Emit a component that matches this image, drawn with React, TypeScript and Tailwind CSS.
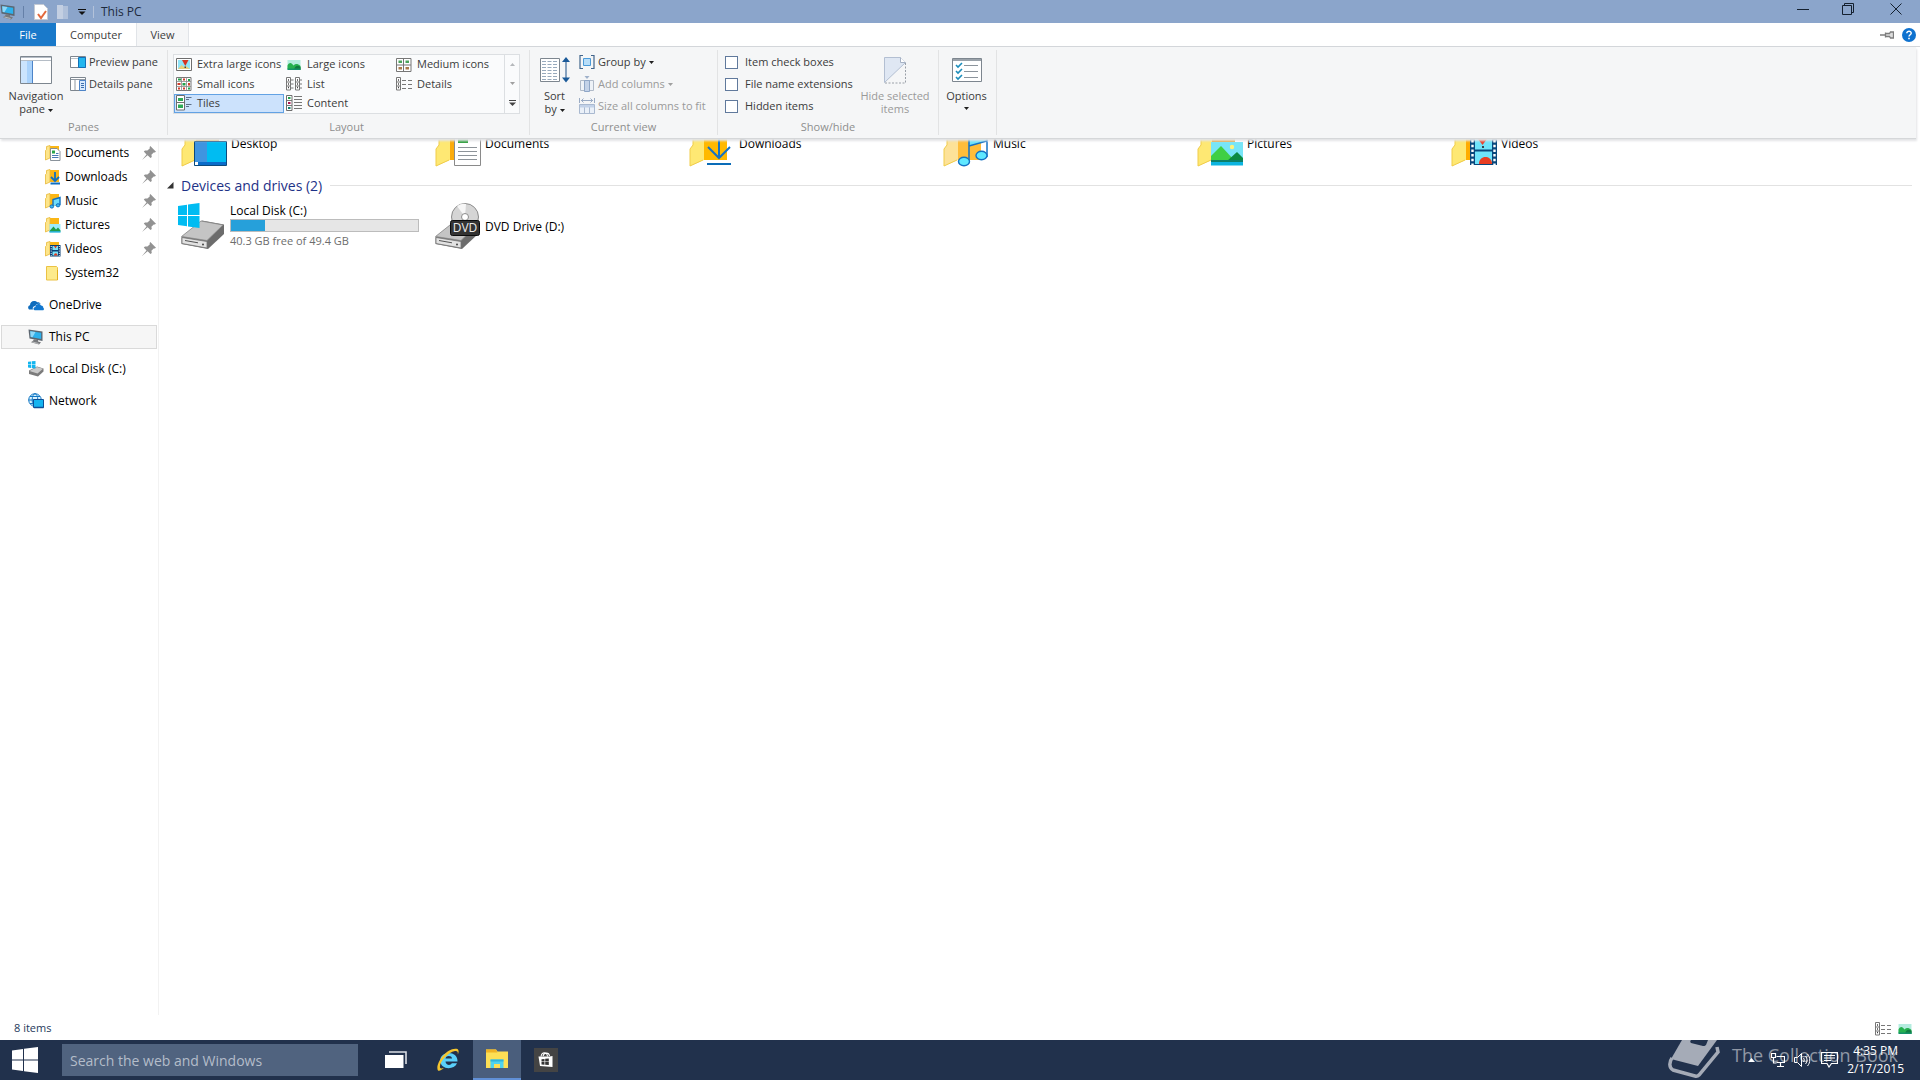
import React from "react";
import clsx from "clsx";

/* ---------- small icons (16px) ---------- */

type IconProps = { className?: string };

function PcIcon({ className }: IconProps) {
  return (
    <svg viewBox="0 0 16 16" className={clsx("size-4 shrink-0", className)}>
      <path d="M.5.5l14 2v9.500l-13-2.500z" fill="#5c6670" />
      <path d="M2.200 2.200l11 1.600v6.200l-10.500-2z" fill="#2db1ec" />
      <path d="M2.200 2.200l5.300.8-3 5.200-1.800-.3z" fill="#8fd8f8" />
      <path d="M6 10.200l4 .8v1.500l3 .8-2 2.200-8-2.200 2-1.600z" fill="#77797c" />
      <path d="M4.500 13l6 1.500" stroke="#c9cbcd" strokeWidth="0.8" />
    </svg>
  );
}

function SmallFolder({ children }: { children?: React.ReactNode }) {
  return (
    <svg viewBox="0 0 16 16" className="size-4 shrink-0">
      <path d="M2.500 1h11.500v12h-11.500z" fill="#fbb615" />
      <path d="M.5 15V5.500l1-1V1.500l3.500-1v12.500z" fill="#fde58a" stroke="#e9b93a" strokeWidth="0.8" />
      {children}
    </svg>
  );
}

const docSmall = (
  <>
    <path d="M5.500 3.500h6.500l3 3v9H5.500z" fill="#fff" stroke="#7d8790" strokeWidth="0.9" />
    <path d="M7 5.500h3v3H7z" fill="#2aa54a" />
    <path d="M7 10.500h6.500M7 12.500h6.500M11 8.500h2.500" stroke="#4a78b5" />
  </>
);
const downSmall = (
  <path d="M10 3v8.500M6 8l4 4 4-4M5.500 14.500h9.500" fill="none" stroke="#0f6fc0" strokeWidth="1.800" />
);
const musicSmall = (
  <>
    <path d="M8 13V6.500l7-2V12" fill="#6fdcfa" stroke="#0f6fc0" strokeWidth="1.400" />
    <ellipse cx="6.800" cy="13.500" rx="1.800" ry="1.600" fill="#3ab8ee" stroke="#0f6fc0" />
    <ellipse cx="13" cy="12.300" rx="1.800" ry="1.600" fill="#3ab8ee" stroke="#0f6fc0" />
  </>
);
const picSmall = (
  <>
    <path d="M4.500 7h11v8.500h-11z" fill="#9cebfb" />
    <path d="M4.500 14l4-4.500 2.500 3 2-2 2.500 3v1h-11z" fill="#1f9c4a" />
    <path d="M4.500 14.300h11v1.200h-11z" fill="#13a8d8" />
  </>
);
const videoSmall = (
  <>
    <path d="M5 4h10.500v11.500H5z" fill="#083f75" />
    <path d="M7.500 5h5.500v4H7.500zM7.500 10.500h5.500v4H7.500z" fill="#7ce2f8" />
    <path d="M9 5h3l-1.500 2.500zM9 14.500c0-3 3.500-3 3.500 0z" fill="#e33a20" />
    <path d="M6.200 5v10M14.300 5v10" stroke="#fff" strokeDasharray="1 1.300" />
  </>
);

function PlainFolder() {
  return (
    <svg viewBox="0 0 16 16" className="size-4 shrink-0">
      <path d="M1.500 1.500h10l1 1v12.500h-11z" fill="#fdea8b" stroke="#ebc244" />
      <path d="M12.500 5v10" stroke="#e3ae1c" />
    </svg>
  );
}

function OneDriveIcon() {
  return (
    <svg viewBox="0 0 16 16" className="size-4 shrink-0">
      <path d="M1 12.500C-.6 11 .2 8.500 2 8.300 2 5.500 4 3.800 6.300 4c1.500 0 2.400.7 3 1.300 1.300-.3 2.800.3 3.300 1.700-3-1-5 .3-5.200 2C5 9.300 4.300 11 5 12.500z" fill="#0f6cbd" />
      <path d="M6.700 13.300c-1.700-.3-1.800-3 .7-3.300 0-3 4-4.200 5.600-1.500C15 8.600 15.400 10 15.200 10.700c1.300.8.800 2.600-.5 2.600z" fill="#1277cf" />
    </svg>
  );
}

function DiskSmall() {
  return (
    <svg viewBox="0 0 16 16" className="size-4 shrink-0">
      <path d="M1 9.500L9 5.500l6.500 2v3L10 15.500l-9-2.500z" fill="#7b7b7b" />
      <path d="M1.500 10L9 6l6 1.800-5.500 4.600z" fill="#c9c9c9" />
      <path d="M0 .8l3-.4v3H0zM3.700.3L7.500 0v3.400H3.700zM0 4h3v3l-3-.4zM3.700 4h3.800v3.500l-3.800-.4z" fill="#12b5ef" />
    </svg>
  );
}

function NetworkIcon() {
  return (
    <svg viewBox="0 0 16 16" className="size-4 shrink-0">
      <circle cx="7" cy="7" r="6.300" fill="#d9f2fd" stroke="#1277c4" />
      <ellipse cx="7" cy="7" rx="2.800" ry="6.300" fill="none" stroke="#1277c4" />
      <path d="M.7 7h12.600M2 3.500h10M2 10.500h4" stroke="#1277c4" />
      <path d="M5.500 6.500h10v8h-10z" fill="#14b4f0" stroke="#0d4f96" />
      <path d="M6 14.500h9.500" stroke="#0d4f96" strokeWidth="1.500" />
    </svg>
  );
}

function PinIcon() {
  return (
    <svg viewBox="0 0 14 14" className="size-[14px] shrink-0">
      <path d="M8.300 0L14 5.700l-1.300.8-1-.1-2.300 2.300.4 2.300-1.300 1L5.600 9.300 0 14l4.500-5.600L1.800 5.600l1.200-1.200 2.400.2L7.700 2.400V1z" fill="#929292" />
    </svg>
  );
}

/* ---------- ribbon icons ---------- */

function NavPaneIcon() {
  return (
    <svg viewBox="0 0 32 28" className="h-7 w-8">
      <path d="M.5.5h31v27H.5z" fill="#fff" stroke="#7d868f" />
      <path d="M1 1.500h30M1 4.500h30" stroke="#b5bdc6" />
      <path d="M1 5h11.500v22H1z" fill="#a9d2fb" />
      <path d="M1 5h6v22H1z" fill="#cbe4fd" />
      <path d="M12.500 5v22" stroke="#4d84c8" />
    </svg>
  );
}

function PreviewIcon() {
  return (
    <svg viewBox="0 0 16 13" className="h-[13px] w-4">
      <path d="M.5.5h15v11H.5z" fill="#fff" stroke="#7d868f" />
      <path d="M1 2.500h14" stroke="#b9c1c9" />
      <path d="M8.500 1.500h7v10h-7z" fill="#23b6ee" stroke="#1370b8" />
    </svg>
  );
}

function DetailsPaneIcon() {
  return (
    <svg viewBox="0 0 16 14" className="h-[14px] w-4">
      <path d="M.5.5h15v13H.5z" fill="#fff" stroke="#7d868f" />
      <path d="M1 2.500h14M5 3v10" stroke="#8f98a1" />
      <path d="M9.500 3.500h6v10h-6z" fill="#d8eafd" stroke="#4d84c8" />
      <path d="M11 6.500h3M11 8.500h3M11 10.500h3" stroke="#3d6fae" />
    </svg>
  );
}

function XlIcon() {
  return (
    <svg viewBox="0 0 16 14" className="h-[14px] w-4">
      <path d="M.5.5h15v12H.5z" fill="#fff" stroke="#6e6e6e" />
      <path d="M2 2h12v9H2z" fill="#8fe4f8" />
      <path d="M2 11l3.500-4L8 9l2-1 4 3z" fill="#e8cf7a" />
      <path d="M6 2h6.500L9.300 8z" fill="#d63322" />
      <path d="M8.500 8.500h1.500v1.500H8.500z" fill="#444" />
    </svg>
  );
}

function LargeIcon() {
  return (
    <svg viewBox="0 0 16 14" className="h-[14px] w-4">
      <path d="M1.500 2h13v10h-13z" fill="#b4ecdf" />
      <path d="M1.500 11V7.500c2-3.500 4-3 6 0 2-2 4-2 7 .5v3z" fill="#25b04f" />
      <path d="M8 12c1-5 4-5 6.500-3v3z" fill="#107c41" />
      <path d="M1.500 10.500h13V12h-13z" fill="#15926a" />
    </svg>
  );
}

function GridIcon({ dense }: { dense?: boolean }) {
  return (
    <svg viewBox="0 0 16 14" className="h-[14px] w-4">
      <path d="M.5.500h14.500v13H.5z" fill="#fff" stroke="#777" />
      {dense ? (
        <>
          <path d="M5.500.5v13M10.500.5v13M.5 4.500h14.500M.5 9.500h14.500" stroke="#8a8a8a" strokeWidth="0.800" />
          <path d="M2 1.500h3v2H2zM12 2h2v2h-2zM6.500 6h3v2.500h-3zM12 10.500h2v2h-2z" fill="#22a14b" />
          <path d="M7 1.500h2v2H7zM1.500 6h3v2h-3zM12 6h2v2.500h-2zM2 10.500h2v2H2zM7 10.500h2v2H7z" fill="#d23b2a" />
        </>
      ) : (
        <>
          <path d="M7.500 .5v13M.5 7h14.500" stroke="#777" />
          <path d="M2.500 2.500h3.500v2.500H2.500zM9.500 2.500h3.500v2.500H9.500z" fill="#4aa35a" />
          <path d="M2.500 9h3.500v2.500H2.500zM9.500 9h3.500v2.500H9.500z" fill="#a97a4a" />
        </>
      )}
    </svg>
  );
}

function ListIcon() {
  return (
    <svg viewBox="0 0 16 14" className="h-[14px] w-4">
      <path d="M.5.500h4v12.500h-4zM9.500.500h4v12.500h-4z" fill="#fff" stroke="#777" />
      <path d="M2 3h1M2 7h1M2 10.500h1M11 3h1M11 7h1M11 10.500h1" stroke="#444" strokeWidth="1.500" />
      <path d="M.5 5h4M.5 9h4M9.500 5h4M9.500 9h4M5 3h2.500M5 7h2.500M5 11h2.500M14 3h2M14 7h2M14 11h2" stroke="#777" />
    </svg>
  );
}

function DetailsIcon() {
  return (
    <svg viewBox="0 0 16 14" className="h-[14px] w-4">
      <path d="M.5.500h4v12.500h-4z" fill="#fff" stroke="#777" />
      <path d="M2 3h1M2 7h1M2 10.500h1" stroke="#444" strokeWidth="1.500" />
      <path d="M.5 5h4M.5 9h4M6 3.500h4M6 7.500h4M6 11.500h4M12 3.500h4M12 7.500h4M12 11.500h4" stroke="#777" />
    </svg>
  );
}

function TilesIcon() {
  return (
    <svg viewBox="0 0 16 16" className="size-4">
      <path d="M.5.500h8v14.500h-8zM.5 7.500h8" fill="#fff" stroke="#6e6e6e" />
      <path d="M2 3h5v3H2zM2 9.500h5v3.500H2z" fill="#2fab57" />
      <path d="M10 2.500h5.500M10 4.500h3M10 9.500h5.500M10 11.500h3" stroke="#5c7089" />
    </svg>
  );
}

function ContentIcon() {
  return (
    <svg viewBox="0 0 16 16" className="size-4">
      <path d="M.5.500h5.500v15H.5z" fill="#fff" stroke="#6e6e6e" />
      <path d="M.5 5.500h5.500M.5 10.500h5.500M8 1.500h8M8 4.500h8M8 7.500h8M8 10.500h8M8 13.500h8" stroke="#777" />
      <path d="M2 2h2.500v2H2z" fill="#22a14b" />
      <path d="M2 7h2.500v2H2z" fill="#b0134f" />
      <path d="M2 12h2.500v2H2z" fill="#14806a" />
    </svg>
  );
}

function SortIcon() {
  return (
    <svg viewBox="0 0 32 28" className="h-7 w-8">
      <path d="M1.500 2.500h19v23h-19z" fill="#fff" stroke="#7d868f" />
      <path d="M3 5.500h16M3 8.500h16M3 11.500h16M3 14.500h16M3 17.500h16M3 20.500h16M3 23.500h16" stroke="#98aabd" strokeDasharray="4 1.500" />
      <path d="M27 4v19" stroke="#1b4f87" />
      <path d="M27 1l4 5h-8zM27 26.500l4-5h-8z" fill="#1b5a99" />
    </svg>
  );
}

function GroupIcon() {
  return (
    <svg viewBox="0 0 16 14" className="h-[14px] w-4">
      <path d="M4 .5H1v13h3M12 .5h3v13h-3" fill="none" stroke="#41658c" strokeWidth="1.200" />
      <path d="M4.500 3.500h7v7h-7z" fill="#b8def9" stroke="#4b9ad8" />
    </svg>
  );
}

function AddColIcon() {
  return (
    <svg viewBox="0 0 16 16" className="size-4">
      <path d="M1.500 4.500h13v10h-13z" fill="#eef2f7" stroke="#b0bac8" />
      <path d="M5.500 4.500h5v11h-5z" fill="#c3d2e8" stroke="#8fa6c6" />
      <path d="M5.500 0h5L8 3z" fill="#9fb1ca" />
    </svg>
  );
}

function SizeColIcon() {
  return (
    <svg viewBox="0 0 16 16" className="size-4">
      <path d="M.5 0v5M15.500 0v5M2 2.500h12M4.500.5l-2 2 2 2M11.500.5l2 2-2 2" fill="none" stroke="#9aabc4" />
      <path d="M.5 6.500h15v9H.5zM5.500 9v6M10.500 9v6" fill="#eaf0f8" stroke="#a9b9d0" />
      <path d="M1 7h14v2.500H1z" fill="#c3d2e8" />
    </svg>
  );
}

function HideIcon() {
  return (
    <svg viewBox="0 0 24 28" className="h-7 w-6">
      <path d="M1.500 1.500h16l5 5-21 20z" fill="#dfe7f3" stroke="#b3bfd2" />
      <path d="M17.500 1.500v5h5" fill="#fff" stroke="#a7b2c4" />
      <path d="M22.500 7v20h-21" fill="none" stroke="#9aa0a8" strokeDasharray="2 1.500" />
    </svg>
  );
}

function OptionsIcon() {
  return (
    <svg viewBox="0 0 32 26" className="h-[26px] w-8">
      <path d="M1.500 1.500h29v23h-29z" fill="#fff" stroke="#7d868f" />
      <path d="M2 3h28" stroke="#9aa2aa" strokeWidth="2" />
      <path d="M13 8.500h14M13 14.500h14M13 20.500h14" stroke="#8c949c" />
      <path d="M5 8l2 2 4-4M5 14l2 2 4-4M5 20l2 2 4-4" fill="none" stroke="#1c8dbb" strokeWidth="1.600" />
    </svg>
  );
}

function Caret({ faded }: { faded?: boolean }) {
  return (
    <svg viewBox="0 0 5 3" className={clsx("inline-block h-[3px] w-[5px] shrink-0", faded ? "fill-[#a0a0a0]" : "fill-[#1f1f1f]")}>
      <path d="M0 0h5L2.500 3z" />
    </svg>
  );
}

/* ---------- large icons, only the lower part of the folders is scrolled into view ---------- */

function FolderTile({ back, children, pale }: { back: string; children: React.ReactNode; pale?: boolean }) {
  return (
    <svg viewBox="0 0 48 28" className="h-7 w-12 shrink-0">
      <path d="M13 0h25v21H13z" fill={back} />
      <path d="M1 27V10l3-4V0h11v21z" fill={pale ? "#fde298" : "#fee873"} />
      <path d="M1 27V10l3-4V0M1 27l13-6" fill="none" stroke="#f0cc4a" />
      {children}
    </svg>
  );
}

const folders = [
  {
    name: "Desktop",
    back: "#e2ab3c",
    art: (
      <>
        <path d="M13.500 2.500h32v24h-32z" fill="#00bcf2" stroke="#0b4a7d" />
        <path d="M14 3h12v20H14z" fill="#3f94e0" />
        <path d="M14 23h31v3H14z" fill="#0a6cc9" />
        <path d="M14 23h3v3h-3z" fill="#fff" />
      </>
    ),
  },
  {
    name: "Documents",
    back: "#fbab0c",
    art: (
      <>
        <path d="M19.500-1h26v27.500h-26z" fill="#fff" stroke="#8a8a8a" />
        <path d="M23 0h10v4H23z" fill="#2f9f3d" />
        <path d="M23 8.500h19M23 12.500h19M23 16.500h19M23 20.500h19" stroke="#8d9399" />
      </>
    ),
  },
  {
    name: "Downloads",
    back: "#ffb900",
    art: (
      <>
        <path d="M30 0v18M19 8l11 11 11-11" fill="none" stroke="#1472c4" strokeWidth="2" />
        <path d="M18 24h24v2H18z" fill="#0a6cb8" />
      </>
    ),
  },
  {
    name: "Music",
    pale: true,
    back: "#ffbd3a",
    art: (
      <>
        <path d="M26 0h18v2L26 7z" fill="#6be3fb" />
        <path d="M26 24V0M26 7l18-5V0v18" fill="none" stroke="#1472c4" strokeWidth="1.500" />
        <ellipse cx="21" cy="22.500" rx="5.500" ry="4.300" fill="#5fe8ff" stroke="#1472c4" strokeWidth="1.400" />
        <ellipse cx="38.500" cy="16.500" rx="5.500" ry="4.300" fill="#5fe8ff" stroke="#1472c4" strokeWidth="1.400" />
      </>
    ),
  },
  {
    name: "Pictures",
    back: "#e2a43e",
    art: (
      <>
        <path d="M14 3h32v23H14z" fill="#77e5f7" />
        <circle cx="35" cy="8" r="2.200" fill="#fff27a" />
        <path d="M14 22V17l10-10 14 15z" fill="#3fcf43" />
        <path d="M30 22l10-9 6 6v3z" fill="#0c8a42" />
        <path d="M14 21h32v2H14z" fill="#0c8068" />
        <path d="M14 23h32v3.500H14z" fill="#0cb4e0" />
      </>
    ),
  },
  {
    name: "Videos",
    back: "#ffac00",
    art: (
      <>
        <path d="M19 0h27v26H19z" fill="#08477c" />
        <path d="M24 0h17v10.500H24zM24 12.500h17V25H24z" fill="#6fe3fa" />
        <path d="M27 0h9l-4.500 6z" fill="#e8402a" />
        <path d="M31 7h2v2h-2z" fill="#34424f" />
        <path d="M28 25c0-9 12-9 13-1v1z" fill="#e83d22" />
        <path d="M21.500 1v25M43.500 1v25" stroke="#fff" strokeWidth="2.400" strokeDasharray="2.500 2.200" />
      </>
    ),
  },
];

function DriveBody() {
  return (
    <>
      <path d="M3.500 34L24 17.500l22 4V31L30 46 3.500 41z" fill="#6c6c6c" />
      <path d="M3.500 33.500L23 18l22 4-16 15.500z" fill="#c4c4c4" stroke="#8a8a8a" strokeWidth="0.800" />
      <path d="M4 34.500l25 4v6.500L4 40.500z" fill="#e2e2e2" stroke="#777" strokeWidth="0.800" />
      <path d="M7 37.500l13 2.300" stroke="#555" />
      <circle cx="25" cy="41.500" r="1" fill="#444" />
    </>
  );
}

function LocalDiskIcon() {
  return (
    <svg viewBox="0 0 48 48" className="size-12 shrink-0">
      <DriveBody />
      <path d="M0 3l9-1.200V12H0zM10 1.600L21.500 0v12H10zM0 13h9v10.200L0 22zM10 13h11.500v12L10 23.400z" fill="#00bcf2" />
    </svg>
  );
}

function DvdIcon() {
  return (
    <svg viewBox="0 0 48 48" className="size-12 shrink-0">
      <DriveBody />
      <circle cx="33" cy="14" r="13.500" fill="#d5d5d5" stroke="#8b8b8b" />
      <path d="M33 14L25 3a13 13 0 0 1 9-2z" fill="#f6f6f6" />
      <circle cx="33" cy="14" r="3.500" fill="#fff" stroke="#8b8b8b" />
      <rect x="18.500" y="17.500" width="29" height="15" rx="2" fill="#333" stroke="#0c0c0c" />
      <text x="33" y="29" textAnchor="middle" fontSize="12" fill="#ececec">DVD</text>
    </svg>
  );
}

/* ---------- data ---------- */

const quickAccess = [
  { name: "Documents", icon: docSmall },
  { name: "Downloads", icon: downSmall },
  { name: "Music", icon: musicSmall },
  { name: "Pictures", icon: picSmall },
  { name: "Videos", icon: videoSmall },
];

const roots = [
  { name: "OneDrive", icon: <OneDriveIcon /> },
  { name: "This PC", icon: <PcIcon />, active: true },
  { name: "Local Disk (C:)", icon: <DiskSmall /> },
  { name: "Network", icon: <NetworkIcon /> },
];

const layouts = [
  { name: "Extra large icons", icon: <XlIcon /> },
  { name: "Large icons", icon: <LargeIcon /> },
  { name: "Medium icons", icon: <GridIcon /> },
  { name: "Small icons", icon: <GridIcon dense /> },
  { name: "List", icon: <ListIcon /> },
  { name: "Details", icon: <DetailsIcon /> },
  { name: "Tiles", icon: <TilesIcon />, active: true },
  { name: "Content", icon: <ContentIcon /> },
];

/* ---------- sections ---------- */

function TitleBar() {
  return (
    <header className="flex h-[23px] items-center bg-[#8ba5cb] text-[#1d2a3d]">
      <PcIcon />
      <span className="ml-[7px] h-3 w-px bg-[#6580a8]" />
      <button aria-label="Properties" className="ml-[10px]">
        <svg viewBox="0 0 14 16" className="h-4 w-[14px]">
          <path d="M.5.500h9l4 4v11H.5z" fill="#fff" stroke="#c4cad4" />
          <path d="M4 10l3 4 5-7" fill="none" stroke="#e2683c" strokeWidth="2" />
        </svg>
      </button>
      <button aria-label="New folder" className="ml-2">
        <svg viewBox="0 0 14 16" className="h-4 w-[14px]">
          <path d="M1 1h6v14H1z" fill="#c3cfe2" />
          <path d="M7 2h5v13H7z" fill="#afc0da" />
        </svg>
      </button>
      <button aria-label="Customize Quick Access Toolbar" className="ml-2">
        <svg viewBox="0 0 8 6" className="h-[6px] w-2">
          <path d="M0 .5h8" stroke="#111" />
          <path d="M.5 2.500h7L4 6z" fill="#111" />
        </svg>
      </button>
      <span className="ml-[7px] h-3 w-px bg-[#b3c2da]" />
      <h1 className="ml-[7px] text-[12px]">This PC</h1>
      <div className="mr-[18px] ml-auto flex h-[18px] items-center gap-[33px] self-start">
        <button aria-label="Minimize">
          <svg viewBox="0 0 12 12" className="size-3"><path d="M0 6.500h12" stroke="#14202f" /></svg>
        </button>
        <button aria-label="Restore">
          <svg viewBox="0 0 12 12" className="size-3">
            <path d="M.5 2.500h9v9h-9zM2.500 2V.5h9v9H10" fill="none" stroke="#14202f" />
          </svg>
        </button>
        <button aria-label="Close" className="ml-[3px]">
          <svg viewBox="0 0 12 12" className="size-3"><path d="M.5.500l11 11M11.500.500l-11 11" stroke="#14202f" /></svg>
        </button>
      </div>
    </header>
  );
}

function Tabs() {
  return (
    <div className="flex h-6 items-stretch border-b border-[#d3d6da] bg-white text-[11px] text-[#404040]">
      <button className="w-14 bg-[#1979ca] pt-px text-white">File</button>
      <button className="w-20 pt-px">Computer</button>
      <button className="w-[53px] border-x border-[#e1e4e8] bg-[#f5f6f7] pt-px">View</button>
      <div className="mr-1 ml-auto flex items-center gap-2">
        <button aria-label="Pin the ribbon">
          <svg viewBox="0 0 14 8" className="h-2 w-[14px]">
            <path d="M0 4h5M5.500 1.500v5M5.500 2.500h4l1-1.500h3v6h-3l-1-1.500h-4" fill="#ddd" stroke="#7d7d7d" strokeWidth="1.300" />
          </svg>
        </button>
        <button aria-label="Help">
          <svg viewBox="0 0 14 14" className="size-[14px]">
            <circle cx="7" cy="7" r="7" fill="#0f72cf" />
            <path d="M4.800 5.300C4.800 2.500 9.300 2.600 9.200 5.200 9.200 6.800 7 6.700 7 8.600" fill="none" stroke="#fff" strokeWidth="1.500" />
            <path d="M6.200 9.700h1.600v1.600H6.200z" fill="#fff" />
          </svg>
        </button>
      </div>
    </div>
  );
}

function Group({ label, className, children }: { label?: string; className: string; children: React.ReactNode }) {
  return (
    <section className={clsx("flex flex-col border-r border-[#e2e3e4]", className)}>
      <div className="flex h-[72px] pt-px">{children}</div>
      <p className="text-center leading-4 text-[#8e8e8e]">{label}</p>
    </section>
  );
}

function Ribbon() {
  return (
    <div className="relative z-10 mr-1 flex h-[92px] border-b border-[#d5d7d9] bg-[#f5f6f7] py-[3px] text-[11px] text-[#3b3b3b] shadow-[1px_2px_2px_#e3e4e6]">
      <Group label="Panes" className="w-[168px]">
        <button className="flex w-[70px] flex-col items-center pt-[5px] pl-[2px] leading-[13px]">
          <NavPaneIcon />
          <span className="mt-[5px]">
            Navigation
            <br />
            pane <Caret />
          </span>
        </button>
        <div className="flex flex-col">
          <button className="flex h-[22px] items-center gap-[3px]"><PreviewIcon />Preview pane</button>
          <button className="flex h-[22px] items-center gap-[3px]"><DetailsPaneIcon />Details pane</button>
        </div>
      </Group>

      <Group label="Layout" className="w-[362px] pr-[9px] pl-[5px]">
        <div className="mt-[3px] flex h-[60px] border border-[#dcdfe2] bg-[#fafbfc]">
          <div className="grid w-[330px] grid-cols-3 grid-rows-3">
            {layouts.map((item) => (
              <button
                key={item.name}
                className={clsx(
                  "flex items-center gap-[5px] border pl-px whitespace-nowrap",
                  item.active ? "border-[#62a2e4] bg-[#cce2fc]" : "border-transparent"
                )}
              >
                <span className="shrink-0">{item.icon}</span>
                {item.name}
              </button>
            ))}
          </div>
          <div className="grid w-[15px] grid-rows-3 border-l border-[#dcdfe2]">
            <button aria-label="Row up" className="flex items-center justify-center">
              <svg viewBox="0 0 5 3" className="h-[3px] w-[5px]"><path d="M0 3h5L2.500 0z" fill="#b5b8bb" /></svg>
            </button>
            <button aria-label="Row down" className="flex items-center justify-center"><Caret faded /></button>
            <button aria-label="More layouts" className="flex items-center justify-center">
              <svg viewBox="0 0 7 6" className="h-[6px] w-[7px]">
                <path d="M0 .5h7" stroke="#444" />
                <path d="M0 2.500h7L3.500 6z" fill="#444" />
              </svg>
            </button>
          </div>
        </div>
      </Group>

      <Group label="Current view" className="w-[188px]">
        <button className="flex w-[49px] flex-col items-center pt-[5px] leading-[13px]">
          <SortIcon />
          <span className="mt-[5px]">
            Sort
            <br />
            by <Caret />
          </span>
        </button>
        <div className="flex flex-col whitespace-nowrap">
          <button className="flex h-[22px] items-center gap-[3px]"><GroupIcon />Group by <Caret /></button>
          <button disabled className="flex h-[22px] items-center gap-[3px] text-[#9a9a9a]"><AddColIcon />Add columns <Caret faded /></button>
          <button disabled className="flex h-[22px] items-center gap-[3px] text-[#9a9a9a]"><SizeColIcon />Size all columns to fit</button>
        </div>
      </Group>

      <Group label="Show/hide" className="w-[221px]">
        <div className="flex w-[136px] flex-col pl-[7px] whitespace-nowrap">
          {["Item check boxes", "File name extensions", "Hidden items"].map((name) => (
            <label key={name} className="flex h-[22px] items-center gap-[7px]">
              <input type="checkbox" className="size-[13px] appearance-none border border-[#60799c] bg-white" />
              {name}
            </label>
          ))}
        </div>
        <button disabled className="flex w-[82px] flex-col items-center pt-[5px] leading-[13px] whitespace-nowrap text-[#9a9a9a]">
          <HideIcon />
          <span className="mt-[5px]">
            Hide selected
            <br />
            items
          </span>
        </button>
      </Group>

      <Group className="w-[58px]">
        <button className="flex w-[55px] flex-col items-center pt-[6px] leading-[13px]">
          <OptionsIcon />
          <span className="mt-[6px]">
            Options
            <span className="flex h-3 items-center justify-center"><Caret /></span>
          </span>
        </button>
      </Group>
    </div>
  );
}

function Sidebar() {
  return (
    <nav className="w-[159px] shrink-0 border-r border-[#f2f2f2] pt-[2px] pl-px text-[12px] text-black">
      {quickAccess.map((item) => (
        <a key={item.name} href="#" className="flex h-6 items-center gap-1 pr-[2px] pl-11">
          <SmallFolder>{item.icon}</SmallFolder>
          {item.name}
          <span className="ml-auto"><PinIcon /></span>
        </a>
      ))}
      <a href="#" className="flex h-6 items-center gap-1 pl-11">
        <PlainFolder />
        System32
      </a>
      {roots.map((item) => (
        <a
          key={item.name}
          href="#"
          className={clsx(
            "mt-2 mr-px flex h-6 items-center gap-[5px] border pl-[26px]",
            item.active ? "border-[#dadada] bg-[#f6f6f6]" : "border-transparent"
          )}
        >
          {item.icon}
          {item.name}
        </a>
      ))}
    </nav>
  );
}

function Content() {
  return (
    <main className="min-w-0 flex-1 text-[12px] text-black">
      <div className="flex pl-[22px]">
        {folders.map((f) => (
          <a key={f.name} href="#" className="flex w-[254px] gap-[2px]">
            <FolderTile back={f.back} pale={f.pale}>{f.art}</FolderTile>
            <span className="leading-[10px]">{f.name}</span>
          </a>
        ))}
      </div>
      <div className="mt-[7px] flex h-[22px] items-center pr-2 pl-2">
        <svg viewBox="0 0 7 7" className="size-[7px]"><path d="M6.500 0v6.500H0z" fill="#333" /></svg>
        <h2 className="ml-[7px] text-[14px] text-[#1e3287]">Devices and drives (2)</h2>
        <span className="ml-2 h-px flex-1 bg-[#e2e2e2]" />
      </div>
      <div className="flex pt-[7px] pl-[19px]">
        <a href="#" className="flex w-[254px] gap-1">
          <LocalDiskIcon />
          <span className="flex flex-col">
            <span className="leading-4">Local Disk (C:)</span>
            <span className="flex h-[13px] w-[189px] border border-[#bcbcbc] bg-[#e6e6e6]">
              <span className="w-[18%] bg-[#26a0da]" />
            </span>
            <span className="text-[11px] leading-[18px] text-[#6d6d6d]">40.3 GB free of 49.4 GB</span>
          </span>
        </a>
        <a href="#" className="flex w-[254px] items-center gap-[5px]">
          <DvdIcon />
          DVD Drive (D:)
        </a>
      </div>
    </main>
  );
}

function StatusBar() {
  return (
    <footer className="flex h-[23px] items-center pr-[7px] pl-[14px] text-[11px] text-[#1e395b]">
      8 items
      <div className="ml-auto flex gap-[6px]">
        <button aria-label="Details view"><DetailsIcon /></button>
        <button aria-label="Large icons view"><LargeIcon /></button>
      </div>
    </footer>
  );
}

function Taskbar() {
  return (
    <div className="relative flex h-10 items-center bg-[#21314c] text-white">
      <button aria-label="Start" className="ml-3">
        <svg viewBox="0 0 26 26" className="size-[26px]">
          <path d="M0 3.500l11-1.500v10.500H0zM12 1.800L26 0v12.500H12zM0 13.500h11V24L0 22.500zM12 13.500h14V26l-14-1.800z" fill="#fff" />
        </svg>
      </button>
      <input
        aria-label="Search the web and Windows"
        placeholder="Search the web and Windows"
        className="ml-6 h-8 w-[296px] bg-[#50637f] px-2 text-[14px] placeholder:text-[#b4bdca] placeholder:opacity-100"
      />
      <div className="ml-[13px] flex h-full">
        <button aria-label="Task view" className="flex w-12 items-center justify-center pl-[2px]">
          <svg viewBox="0 0 22 18" className="h-[18px] w-[22px]">
            <path d="M4 1h17v12" fill="none" stroke="#d9dde3" strokeWidth="1.600" />
            <path d="M0 4h18.500v13H0z" fill="#fff" />
          </svg>
        </button>
        <button aria-label="Internet Explorer" className="flex w-[54px] items-center justify-center pl-[3px]">
          <svg viewBox="0 0 24 24" className="size-6">
            <path d="M21.500 13.500H9.500c.2 3.800 5 4.500 6.300 1.800h5.200C18 22.500 4.200 22 4.200 12.600 4.200 2.500 22 2.200 21.500 13.500zM9.500 10.400h6.600c-.3-3.300-6.200-3.300-6.600 0z" fill="#5ad0fa" />
            <path d="M2 22.500C-1.500 17 10-.5 20.500.8c3 .6 2.200 4 1.200 5.800.5-2.500-.2-4-2.700-3.600C11.500 4.500 3 14.500 4 19.500c.5 1.500 2.500 1 4 .3C6 21.800 3.500 23.300 2 22.500z" fill="#f6c62f" />
          </svg>
        </button>
        <button aria-label="File Explorer" className="flex w-12 items-center justify-center border-b-2 border-[#6190d6] bg-[#4a5e7c]">
          <svg viewBox="0 0 22 20" className="h-5 w-[22px]">
            <path d="M0 .5h10l1.500 2H22V19H0z" fill="#fddf55" />
            <path d="M0 .5h10l1.500 3H0z" fill="#f0b323" />
            <path d="M4.500 19v-8.500h13V19H14v-4H8v4z" fill="#4fd3ee" />
            <path d="M4.500 10.500h13v2h-13z" fill="#2fb3da" />
          </svg>
        </button>
        <button aria-label="Store" className="flex w-12 items-center justify-center pl-[2px]">
          <svg viewBox="0 0 24 24" className="size-6">
            <path d="M0 0h24v24H0z" fill="#444" />
            <path d="M4.500 8.500h11L18.500 8v11L6 18z" fill="#fff" />
            <path d="M7 8.500c1-5 6-5 6.500 0M9 8c1-4 6-4 6.500 0" fill="none" stroke="#fff" strokeWidth="1.100" />
            <path d="M7.500 11.200l3-.3v2.500h-3zM11.200 10.800l3.600-.4v3h-3.600zM7.500 14.100h3V16.700l-3-.3zM11.200 14.100h3.600v3l-3.600-.4z" fill="#333" />
          </svg>
        </button>
      </div>

      {/* semi-transparent channel watermark */}
      <div className="pointer-events-none absolute top-0 right-[22px] flex h-full gap-3 overflow-hidden text-white/50">
        <svg viewBox="0 0 52 40" className="h-10 w-[52px]">
          <path d="M14 0h35L30 26 3 19z" fill="#a5abb7" />
          <path d="M23 0h17l-2 5c-1 1-2 1-3 1L23 3c-1-1-1-2 0-3z" fill="#21314c" />
          <path d="M4 18C1 22 1 28 5 30l22 6c2 .5 3 0 4-1L50 12l-1-5" fill="none" stroke="#a5abb7" strokeWidth="3.500" />
        </svg>
        <span className="pt-[2px] text-[18px] leading-[26px]">The Collection Book</span>
      </div>

      <div className="mr-4 ml-auto flex h-full items-center text-[12px]">
        <button aria-label="Show hidden icons" className="mr-4">
          <svg viewBox="0 0 7 4" className="h-1 w-[7px]"><path d="M0 4h7L3.500 0z" fill="#fff" /></svg>
        </button>
        <button aria-label="Network" className="mr-[9px]">
          <svg viewBox="0 0 14 14" className="size-[14px]">
            <path d="M5.500 3.500h8v6h-8M9.500 10v3M6 13.500h7" fill="none" stroke="#fff" strokeWidth="1.200" />
            <path d="M.5.500h4v4h-4zM2.500 5v5h3" fill="none" stroke="#fff" strokeWidth="1.200" />
          </svg>
        </button>
        <button aria-label="Volume" className="mr-[10px]">
          <svg viewBox="0 0 17 14" className="h-[14px] w-[17px]">
            <path d="M.5 4.500h3l4-4v13l-4-4h-3z" fill="none" stroke="#fff" />
            <path d="M9.500 5c1 1.500 1 2.500 0 4M11.500 3c2 2.500 2 5.500 0 8M13.500 1c3 3.500 3 8.500 0 12" fill="none" stroke="#fff" />
          </svg>
        </button>
        <button aria-label="Notifications" className="mr-[9px]">
          <svg viewBox="0 0 17 16" className="h-4 w-[17px]">
            <path d="M.5.500h16v11h-6l-2.500 3.500-2-3.500H.5z" fill="none" stroke="#fff" strokeWidth="1.200" />
            <path d="M3 3.500h11M3 6h11M3 8.500h7" stroke="#fff" />
          </svg>
        </button>
        <button className="text-center leading-[18px]">
          4:35 PM
          <br />
          2/17/2015
        </button>
      </div>
    </div>
  );
}

export default function App() {
  return (
    <div className="flex min-h-screen flex-col bg-white font-['Open_Sans','Noto_Sans',sans-serif]">
      <TitleBar />
      <Tabs />
      <Ribbon />
      <div className="flex flex-1 pb-[2px]">
        <Sidebar />
        <Content />
      </div>
      <StatusBar />
      <Taskbar />
    </div>
  );
}
